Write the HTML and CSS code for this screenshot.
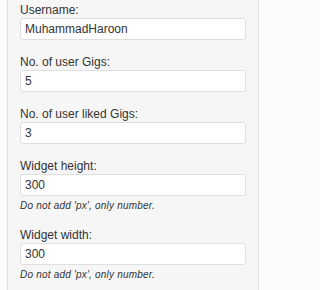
FILE: index.html
```html
<!DOCTYPE html>
<html>
<head>
<meta charset="utf-8">
<link rel="stylesheet" href="styles.css">
</head>
<body>
<div class="panel">
  <div class="field">
    <label class="label" for="u">Username:</label>
    <input class="input" id="u" type="text" value="MuhammadHaroon">
  </div>
  <div class="field">
    <label class="label" for="g">No. of user Gigs:</label>
    <input class="input" id="g" type="text" value="5">
  </div>
  <div class="field">
    <label class="label" for="l">No. of user liked Gigs:</label>
    <input class="input" id="l" type="text" value="3">
  </div>
  <div class="field">
    <label class="label" for="h">Widget height:</label>
    <input class="input" id="h" type="text" value="300">
    <div class="hint">Do not add 'px', only number.</div>
  </div>
  <div class="field">
    <label class="label" for="w">Widget width:</label>
    <input class="input" id="w" type="text" value="300">
    <div class="hint">Do not add 'px', only number.</div>
  </div>
</div>
</body>
</html>
```

FILE: styles.css
```css
html, body {
  margin: 0;
  padding: 0;
  background: #fcfcfc;
  font-family: "Liberation Sans", Arial, sans-serif;
  color: #333;
}
.panel {
  margin-left: 7px;
  width: 250px;
  height: 290px;
  box-sizing: content-box;
  border-left: 1px solid #dfdfdf;
  border-right: 1px solid #dfdfdf;
  background: #f6f6f6;
  padding: 3px 12px 0 12px;
  box-sizing: border-box;
  width: 252px;
  display: flex;
  flex-direction: column;
}
.field {
  display: flex;
  flex-direction: column;
  margin-bottom: 15px;
}
.label {
  display: block;
  font-size: 12px;
  line-height: 14px;
  margin-bottom: 1px;
  color: #333;
}
.input {
  box-sizing: border-box;
  width: 226px;
  height: 22px;
  margin: 0;
  padding: 0 4px;
  border: 1px solid #dfdfdf;
  border-radius: 3px;
  background: #fff;
  font-family: "Liberation Sans", Arial, sans-serif;
  font-size: 12px;
  color: #333;
  outline: none;
}
.hint {
  margin-top: 3px;
  font-size: 10px;
  line-height: 14px;
  font-style: italic;
  letter-spacing: 0.2px;
  color: #333;
}
```
